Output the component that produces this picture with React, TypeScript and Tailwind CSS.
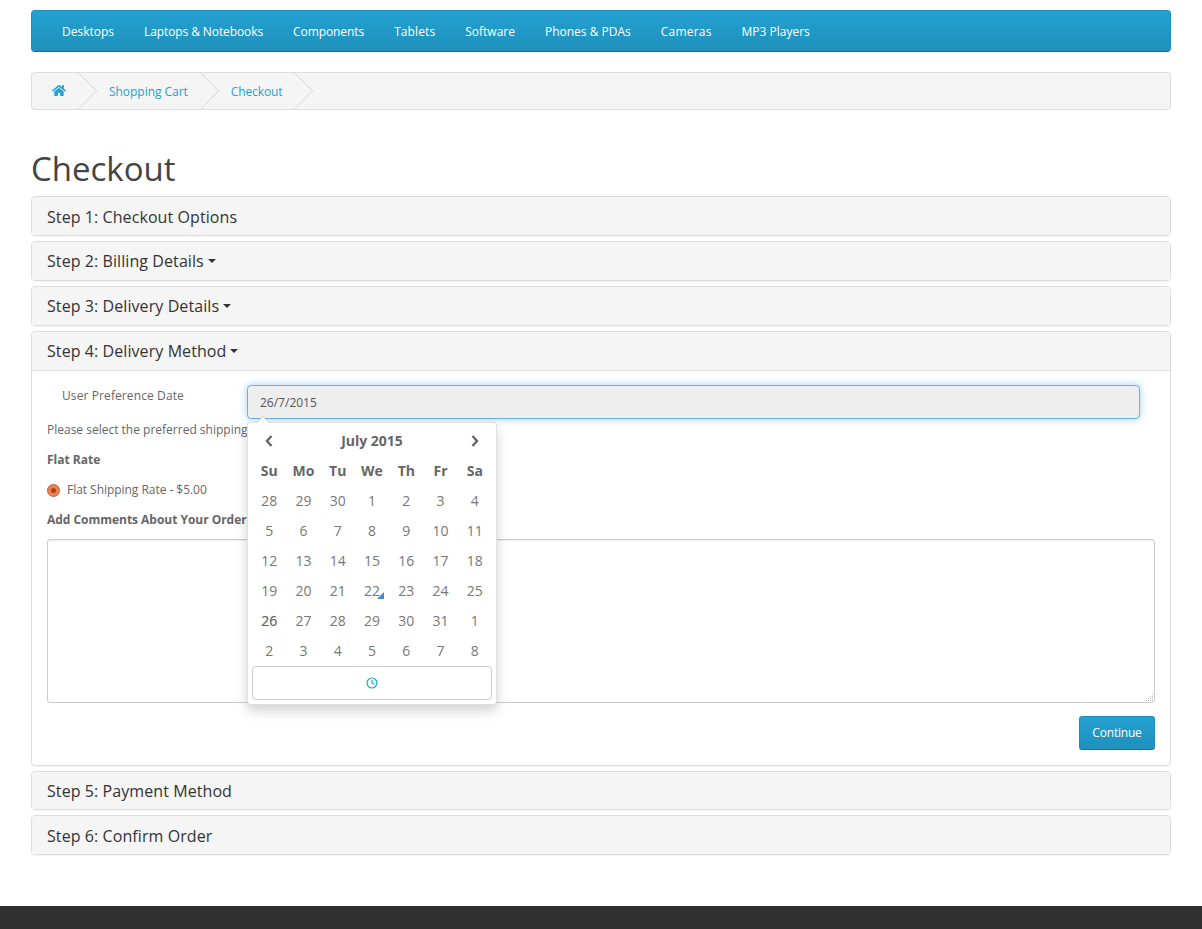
import { Clock } from "lucide-react";
import { FaHome } from "react-icons/fa";

const navLinks = [
  { label: "Desktops", cls: "" },
  { label: "Laptops & Notebooks", cls: "tracking-[-0.1px]" },
  { label: "Components", cls: "tracking-[-0.08px]" },
  { label: "Tablets", cls: "tracking-[0.1px]" },
  { label: "Software", cls: "" },
  { label: "Phones & PDAs", cls: "" },
  { label: "Cameras", cls: "tracking-[0.2px]" },
  { label: "MP3 Players", cls: "" },
];
const weekDays = ["Su", "Mo", "Tu", "We", "Th", "Fr", "Sa"];
const days = [
  28, 29, 30, 1, 2, 3, 4, 5, 6, 7, 8, 9, 10, 11, 12, 13, 14, 15, 16, 17, 18, 19, 20, 21, 22, 23, 24, 25, 26, 27, 28, 29, 30, 31, 1, 2, 3, 4, 5, 6, 7, 8,
];

const Caret = () => (
  <span className="inline-block ml-[4px] align-middle w-0 h-0 border-x-[4px] border-x-transparent border-t-[4px] border-t-[#333]" />
);

const Crumb = ({ children, cls }: { children: React.ReactNode; cls: string }) => (
  <div className={`relative h-full flex items-center ${cls}`}>
    {children}
    <div className="absolute top-[5px] right-[-13px] w-[26px] h-[26px] rotate-45 border-t border-r border-[#dddddd]" />
  </div>
);

const PanelHead = ({ title, caret, cls = "h-[38px]" }: { title: string; caret?: boolean; cls?: string }) => (
  <div className={`${cls} px-[15px] flex items-center text-[16px] tracking-[0.08px] text-[#333] bg-[#f5f5f5] rounded-t-[3px]`}>
    <span>{title}</span>
    {caret && <Caret />}
  </div>
);

const Panel = ({ title, caret, cls }: { title: string; caret?: boolean; cls?: string }) => (
  <div className="border border-[#ddd] rounded-[4px] shadow-[0_1px_1px_rgba(0,0,0,0.05)]">
    <PanelHead title={title} caret={caret} cls={cls} />
  </div>
);

const Chevron = ({ points }: { points: string }) => (
  <svg width="8" height="12" viewBox="0 0 8 12" className="text-[#666]">
    <polyline points={points} fill="none" stroke="currentColor" strokeWidth="2.4" />
  </svg>
);

const DatePicker = () => (
  <div className="absolute left-[215px] top-[51px] w-[250px] h-[283px] px-[4px] pt-[2px] bg-white border border-[#ccc]/60 rounded-[4px] shadow-[0_6px_12px_rgba(0,0,0,0.175)]">
    <div className="absolute top-[-7px] left-[8px] w-0 h-0 border-x-[7px] border-x-transparent border-b-[7px] border-b-[#ccc]" />
    <div className="absolute top-[-6px] left-[8px] w-0 h-0 border-x-[7px] border-x-transparent border-b-[7px] border-b-white" />
    <div className="grid grid-cols-7 text-center text-[14px] text-[#777]">
      <div className="h-[30px] flex items-center justify-center pt-[1px]">
        <Chevron points="6.5,1 2,6 6.5,11" />
      </div>
      <div className="col-span-5 h-[30px] flex items-center justify-center font-bold text-[#666]">July 2015</div>
      <div className="h-[30px] flex items-center justify-center pt-[1px]">
        <Chevron points="1.5,1 6,6 1.5,11" />
      </div>
      {weekDays.map((d) => (
        <div key={d} className="h-[30px] flex items-center justify-center font-bold text-[#666]">
          {d}
        </div>
      ))}
      {days.map((d, i) => (
        <div
          key={i}
          className={`relative h-[30px] flex items-center justify-center ${i === 28 ? "text-[#666] [text-shadow:0_0_1px_rgba(0,0,0,0.3)]" : ""}`}
        >
          {d}
          {i === 24 && (
            <span className="absolute right-[5px] bottom-[6px] w-0 h-0 border-l-[7px] border-l-transparent border-b-[7px] border-b-[#428bca]" />
          )}
        </div>
      ))}
    </div>
    <div className="mt-[1px] h-[34px] flex items-center justify-center border border-[#ccc] rounded-[4px] bg-white">
      <Clock className="w-[12px] h-[12px] text-[#23a1d1]" strokeWidth={2.4} />
    </div>
  </div>
);

export default function App() {
  return (
    <div className="min-h-[929px] flex flex-col bg-white font-['Open_Sans','Liberation_Sans',sans-serif] text-[12px] text-[#666]">
      <div className="w-[1140px] mx-auto pt-[10px] flex-1">
        <nav className="h-[42px] px-[15px] pt-[2px] flex items-center rounded-[4px] border border-[#1f90bb] border-b-[#1b6f94] bg-gradient-to-b from-[#23a1d1] to-[#1f90bb]">
          {navLinks.map((link) => (
            <a key={link.label} className={`px-[15px] text-white text-[12px] ${link.cls}`}>
              {link.label}
            </a>
          ))}
        </nav>

        <div className="mt-[20px] h-[38px] flex items-center overflow-hidden border border-[#ddd] rounded-[4px] bg-[#f5f5f5] text-[#23a1d1]">
          <Crumb cls="pl-[20px] pr-[13px]">
            <FaHome className="w-[14px] h-[13px] mb-[2px]" />
          </Crumb>
          <Crumb cls="pl-[30px] pr-[13px]">
            <span className="pt-[2px] tracking-[-0.04px]">Shopping Cart</span>
          </Crumb>
          <Crumb cls="pl-[30px] pr-[12px]">
            <span className="pt-[2px] tracking-[-0.1px]">Checkout</span>
          </Crumb>
        </div>

        <h1 className="mt-[34px] mb-[2px] h-[50px] text-[33px] leading-[36px] text-[#444] flex items-center">Checkout</h1>

        <div className="flex flex-col gap-[5px]">
          <Panel title="Step 1: Checkout Options" cls="h-[38px] pt-[2px]" />
          <Panel title="Step 2: Billing Details" caret />
          <Panel title="Step 3: Delivery Details" caret />

          <div className="border border-[#ddd] rounded-[4px] shadow-[0_1px_1px_rgba(0,0,0,0.05)]">
            <div className="border-b border-[#ddd]">
              <PanelHead title="Step 4: Delivery Method" caret />
            </div>
            <div className="relative px-[15px] pt-[14px] h-[394px]">
              <div className="flex items-start">
                <label className="w-[200px] pl-[15px] pt-[1px] leading-[20px] tracking-[0.1px]">User Preference Date</label>
                <div className="w-[893px] h-[34px] px-[12px] pt-[2px] flex items-center text-[12px] text-[#555] bg-[#eee] border border-[#66afe9] rounded-[4px] shadow-[0_0_8px_rgba(102,175,233,0.6)]">
                  26/7/2015
                </div>
              </div>
              <p className="mt-[1px] h-[20px] leading-[20px]">Please select the preferred shipping method to use on this order.</p>
              <p className="mt-[10px] h-[20px] leading-[20px] font-bold">Flat Rate</p>
              <div className="mt-[10px] h-[20px] flex items-center">
                <span className="w-[13px] h-[13px] rounded-full flex items-center justify-center bg-[#ee7f55] border border-[#c4623c]">
                  <span className="w-[5px] h-[5px] rounded-full bg-[#a8431c]" />
                </span>
                <span className="ml-[7px] tracking-[-0.04px]">Flat Shipping Rate - $5.00</span>
              </div>
              <p className="mt-[10px] h-[20px] leading-[20px] font-bold tracking-[-0.03px]">Add Comments About Your Order</p>
              <div className="relative mt-[9px] w-[1108px] h-[164px]">
                <textarea
                  readOnly
                  className="block w-full h-full resize-none bg-white border border-[#ccc] rounded-[3px] shadow-[inset_0_1px_1px_rgba(0,0,0,0.075)]"
                />
                <svg width="9" height="9" viewBox="0 0 9 9" className="absolute right-[1px] bottom-[1px] text-[#bbb]" fill="currentColor">
                  <rect x="7" y="1" width="1" height="1" />
                  <rect x="5" y="3" width="1" height="1" />
                  <rect x="7" y="3" width="1" height="1" />
                  <rect x="3" y="5" width="1" height="1" />
                  <rect x="5" y="5" width="1" height="1" />
                  <rect x="7" y="5" width="1" height="1" />
                  <rect x="1" y="7" width="1" height="1" />
                  <rect x="3" y="7" width="1" height="1" />
                  <rect x="5" y="7" width="1" height="1" />
                  <rect x="7" y="7" width="1" height="1" />
                </svg>
              </div>
              <div className="mt-[13px] flex justify-end">
                <button className="w-[76px] h-[34px] text-white text-[12px] tracking-[-0.2px] rounded-[3px] border border-[#1f90bb] border-b-[#1b6f94] bg-gradient-to-b from-[#23a1d1] to-[#1f90bb]">
                  Continue
                </button>
              </div>
              <DatePicker />
            </div>
          </div>

          <Panel title="Step 5: Payment Method" cls="h-[37px]" />
          <Panel title="Step 6: Confirm Order" cls="h-[38px] pt-[2px]" />
        </div>
      </div>
      <footer className="h-[23px] bg-[#303030]" />
    </div>
  );
}
